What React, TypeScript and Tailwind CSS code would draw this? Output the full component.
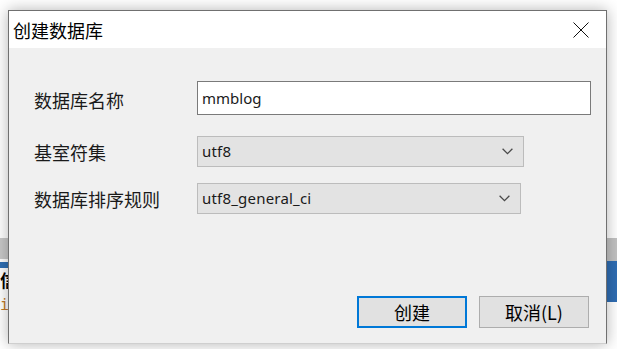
const cjk = "font-['Microsoft_YaHei','Noto_Sans_CJK_SC',sans-serif]";
const latin = "font-['Noto_Sans','Noto_Sans_CJK_SC',sans-serif]";

function Select({ value, width }: { value: string; width: string }) {
  return (
    <div className={`${width} h-[31px] flex items-center justify-between border border-[#bcbcbc] bg-[#e3e3e3] pl-[4px] pr-[10px]`}>
      <span className={`${latin} text-[15px] tracking-[0.2px] text-[#1a1a1a]`}>{value}</span>
      <svg width="11" height="7" viewBox="0 0 11 7">
        <path d="M0.6 0.8L5.5 5.6L10.4 0.8" fill="none" stroke="#4a4a4a" strokeWidth="1.3" />
      </svg>
    </div>
  );
}

export default function App() {
  return (
    <div className={`relative w-[617px] h-[349px] overflow-hidden bg-white flex justify-between ${cjk}`}>
      {/* app behind the dialog */}
      <div className="w-[8px] flex flex-col overflow-hidden">
        <div className="h-[238px]" />
        <div className="h-[21px] bg-[#c8c8c8]" />
        <div className="h-[3px]" />
        <div className="h-[6px] bg-[#2f6fb3]" />
        <div className="h-[24px] pt-[3px] text-[17px] font-bold leading-none text-black whitespace-nowrap">信</div>
        <div className="h-[20px] pt-[6px] font-['DejaVu_Sans_Mono',monospace] text-[15px] leading-none text-[#c07a2a] whitespace-nowrap">i</div>
      </div>
      <div className="w-[11px] flex flex-col">
        <div className="h-[238px]" />
        <div className="h-[23px] bg-[#c2c2c2]" />
        <div className="h-[41px] bg-[#2f6db3]" />
      </div>

      {/* dialog */}
      <div className="absolute left-[8px] top-[10px] w-[599px] h-[334px] flex flex-col border border-[#707070] border-b-[#cfcfcf] bg-[#f0f0f0] shadow-[0_0_14px_rgba(0,0,0,0.3)]">
        <div className="h-[37px] bg-white flex items-center justify-between pl-[4px]">
          <span className="text-[18px] text-black leading-none">创建数据库</span>
          <div className="w-[46px] h-full mr-[2px] flex items-center justify-center">
            <svg width="16" height="16" viewBox="0 0 16 16">
              <path d="M0.5 0.5L15.5 15.5M15.5 0.5L0.5 15.5" stroke="#111" strokeWidth="1" />
            </svg>
          </div>
        </div>

        <div className="flex-1 flex flex-col pt-[33px] pl-[25px]">
          <div className="flex items-center">
            <span className="w-[163px] text-[18px] text-[#1a1a1a] pt-[4px]">数据库名称</span>
            <div className="w-[394px] h-[34px] flex items-center border border-[#7a7a7a] bg-white pl-[4px]">
              <span className={`${latin} text-[15px] text-[#1a1a1a]`}>mmblog</span>
            </div>
          </div>
          <div className="flex items-center mt-[21px]">
            <span className="w-[163px] text-[18px] text-[#1a1a1a] pt-[2px]">基室符集</span>
            <Select value="utf8" width="w-[327px]" />
          </div>
          <div className="flex items-center mt-[16px]">
            <span className="w-[163px] text-[18px] text-[#1a1a1a] pt-[1px]">数据库排序规则</span>
            <Select value="utf8_general_ci" width="w-[324px]" />
          </div>

          <div className="mt-auto flex justify-end gap-[12px] pr-[17px] pb-[15px]">
            <button className="w-[110px] h-[32px] border-2 border-[#0078d7] bg-[#e1e1e1] text-[18px] text-black leading-none">创建</button>
            <button className="w-[110px] h-[32px] border border-[#adadad] bg-[#e1e1e1] text-[18px] text-black leading-none">取消(L)</button>
          </div>
        </div>
      </div>
    </div>
  );
}
